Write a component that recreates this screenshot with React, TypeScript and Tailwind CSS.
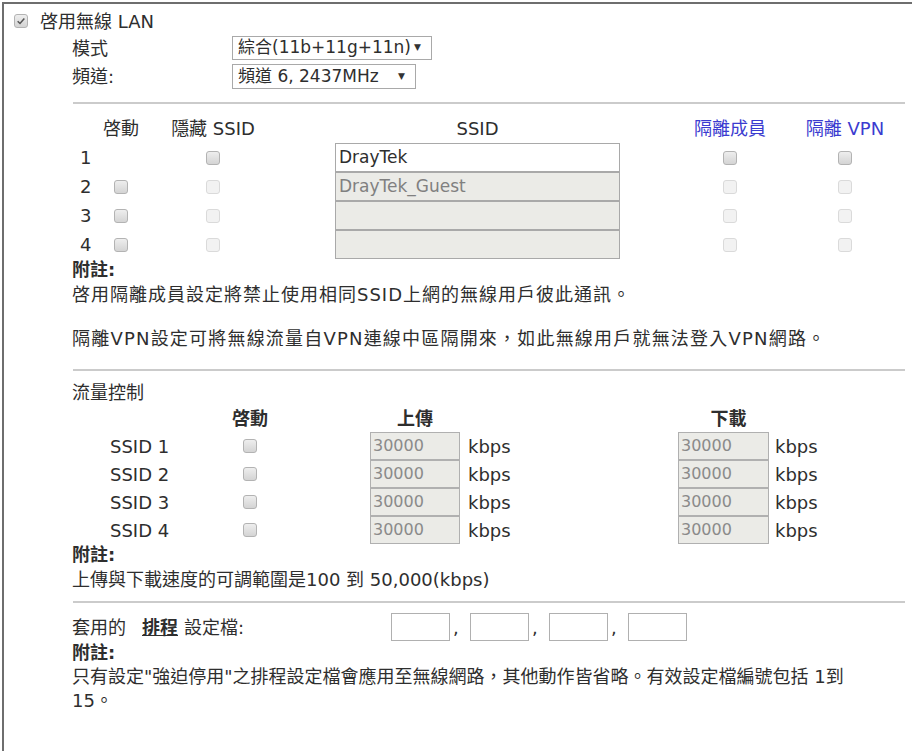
import React from "react";

const FONT = "font-['DejaVu_Sans','Noto_Sans_CJK_TC',sans-serif]";

/* small square checkbox, drawn like the router's grey ones */
function Box({ muted, checked }: { muted?: boolean; checked?: boolean }) {
    if (muted) {
        return (
            <span className="inline-block w-[14px] h-[14px] rounded-[3px] border border-[#dadada] bg-[#f2f2f2]" />
        );
    }
    return (
        <span className="relative inline-flex items-center justify-center w-[14px] h-[14px] rounded-[3px] border border-[#b3b3b3] bg-gradient-to-b from-[#eeeeee] to-[#d4d4d4]">
            {checked && (
                <svg viewBox="0 0 12 12" className="w-[10px] h-[10px]">
                    <path
                        d="M2 6.2 L4.8 9 L10 3"
                        fill="none"
                        stroke="#555"
                        strokeWidth="1.8"
                    />
                </svg>
            )}
        </span>
    );
}

function Select({ label, width }: { label: string; width: string }) {
    return (
        <div
            className={`${width} h-full flex items-center justify-between border border-[#a9a9a9] bg-white pl-[5px] pr-[10px] text-[17px]`}
        >
            <span>{label}</span>
            <span className="text-[9px] text-[#333]">▼</span>
        </div>
    );
}

function Rule() {
    return <div className="ml-[1px] w-[832px] h-[2px] bg-[#cbcbcb]" />;
}

const ssidRows = [
    { n: 1, name: "DrayTek", on: true },
    { n: 2, name: "DrayTek_Guest", on: false },
    { n: 3, name: "", on: false },
    { n: 4, name: "", on: false },
];

export default function App() {
    return (
        <div
            className={`w-[912px] h-[751px] overflow-hidden bg-white pt-[2px] pl-[2px] text-[#2e2e2e] text-[18px] ${FONT}`}
        >
            <div className="h-full border-t-2 border-l-2 border-[#6e6e6e]">
                {/* enable wireless LAN */}
                <div className="mt-[6px] h-[22px] flex items-center pl-[10px] gap-[12px]">
                    <Box checked />
                    <span>啓用無線 LAN</span>
                </div>

                <div className="ml-[68px]">
                    <div className="mt-[4px] h-[24px] flex items-center">
                        <span className="w-[160px]">模式</span>
                        <Select label="綜合(11b+11g+11n)" width="w-[200px]" />
                    </div>
                    <div className="mt-[4px] h-[25px] flex items-center">
                        <span className="w-[160px]">頻道:</span>
                        <Select label="頻道 6, 2437MHz" width="w-[184px]" />
                    </div>

                    <div className="mt-[13px]">
                        <Rule />
                    </div>

                    {/* SSID table */}
                    <div className="mt-[10px] grid grid-cols-[28px_42px_142px_51px_285px_70px_80px_20px_110px] auto-rows-[29px] items-center">
                        <span />
                        <span className="text-center">啓動</span>
                        <span className="text-center">隱藏 SSID</span>
                        <span />
                        <span className="text-center">SSID</span>
                        <span />
                        <span className="text-center text-[#3b3bd0]">隔離成員</span>
                        <span />
                        <span className="text-center text-[#3b3bd0]">隔離 VPN</span>

                        {ssidRows.map((row) => (
                            <React.Fragment key={row.n}>
                                <span className="pl-[8px]">{row.n}</span>
                                <span className="flex justify-center">
                                    {row.n > 1 && <Box />}
                                </span>
                                <span className="flex justify-center">
                                    <Box muted={!row.on} />
                                </span>
                                <span />
                                <div
                                    className={
                                        row.on
                                            ? "h-[29px] flex items-center border border-[#a9a9a9] bg-white pl-[3px] text-[17px]"
                                            : "h-[29px] flex items-center border border-[#a9a9a9] bg-[#ebebe7] pl-[3px] text-[17px] text-[#808080]"
                                    }
                                >
                                    {row.name}
                                </div>
                                <span />
                                <span className="flex justify-center">
                                    <Box muted={!row.on} />
                                </span>
                                <span />
                                <span className="flex justify-center">
                                    <Box muted={!row.on} />
                                </span>
                            </React.Fragment>
                        ))}
                    </div>

                    <div className="leading-[22px] font-bold">附註:</div>
                    <div className="mt-[2px] leading-[24px] tracking-[1px]">
                        啓用隔離成員設定將禁止使用相同SSID上網的無線用戶彼此通訊。
                    </div>
                    <div className="mt-[20px] leading-[24px] tracking-[1.2px]">
                        隔離VPN設定可將無線流量自VPN連線中區隔開來，如此無線用戶就無法登入VPN網路。
                    </div>

                    <div className="mt-[18px]">
                        <Rule />
                    </div>

                    {/* rate control */}
                    <div className="mt-[10px] leading-[24px]">流量控制</div>
                    <div className="grid grid-cols-[128px_100px_70px_90px_218px_91px_auto] items-center">
                        <span className="h-[23px]" />
                        <span className="text-center font-semibold">啓動</span>
                        <span />
                        <span className="text-center font-semibold">上傳</span>
                        <span />
                        <span className="text-center font-semibold pl-[10px]">下載</span>
                        <span />
                        {[1, 2, 3, 4].map((n) => (
                            <React.Fragment key={n}>
                                <span className="h-[28px] flex items-center pl-[38px]">
                                    SSID {n}
                                </span>
                                <span className="flex justify-center">
                                    <Box />
                                </span>
                                <span />
                                <div className="h-[28px] flex items-center border border-[#b0b0b0] bg-[#ebebe7] pl-[2px] text-[16px] text-[#8a8a8a]">
                                    30000
                                </div>
                                <span className="pl-[8px]">kbps</span>
                                <div className="h-[28px] flex items-center border border-[#b0b0b0] bg-[#ebebe7] pl-[2px] text-[16px] text-[#8a8a8a]">
                                    30000
                                </div>
                                <span className="pl-[6px]">kbps</span>
                            </React.Fragment>
                        ))}
                    </div>

                    <div className="leading-[22px] font-bold">附註:</div>
                    <div className="mt-[2px] leading-[24px]">
                        上傳與下載速度的可調範圍是100 到 50,000(kbps)
                    </div>

                    <div className="mt-[9px]">
                        <Rule />
                    </div>

                    {/* schedule profiles */}
                    <div className="mt-[10px] h-[28px] flex items-center">
                        <span className="w-[319px]">
                            套用的
                            <span className="ml-[16px] mr-[6px] font-bold underline">排程</span>
                            設定檔:
                        </span>
                        {[0, 1, 2, 3].map((i) => (
                            <React.Fragment key={i}>
                                <div className="w-[59px] h-[28px] border border-[#b0b0b0] bg-white" />
                                {i < 3 && <span className="w-[20px] pl-[3px]">,</span>}
                            </React.Fragment>
                        ))}
                    </div>
                    <div className="leading-[24px] font-bold">附註:</div>
                    <div className="leading-[24px]">
                        只有設定"強迫停用"之排程設定檔會應用至無線網路，其他動作皆省略。有效設定檔編號包括 1到
                        <br />
                        15。
                    </div>
                </div>
            </div>
        </div>
    );
}
